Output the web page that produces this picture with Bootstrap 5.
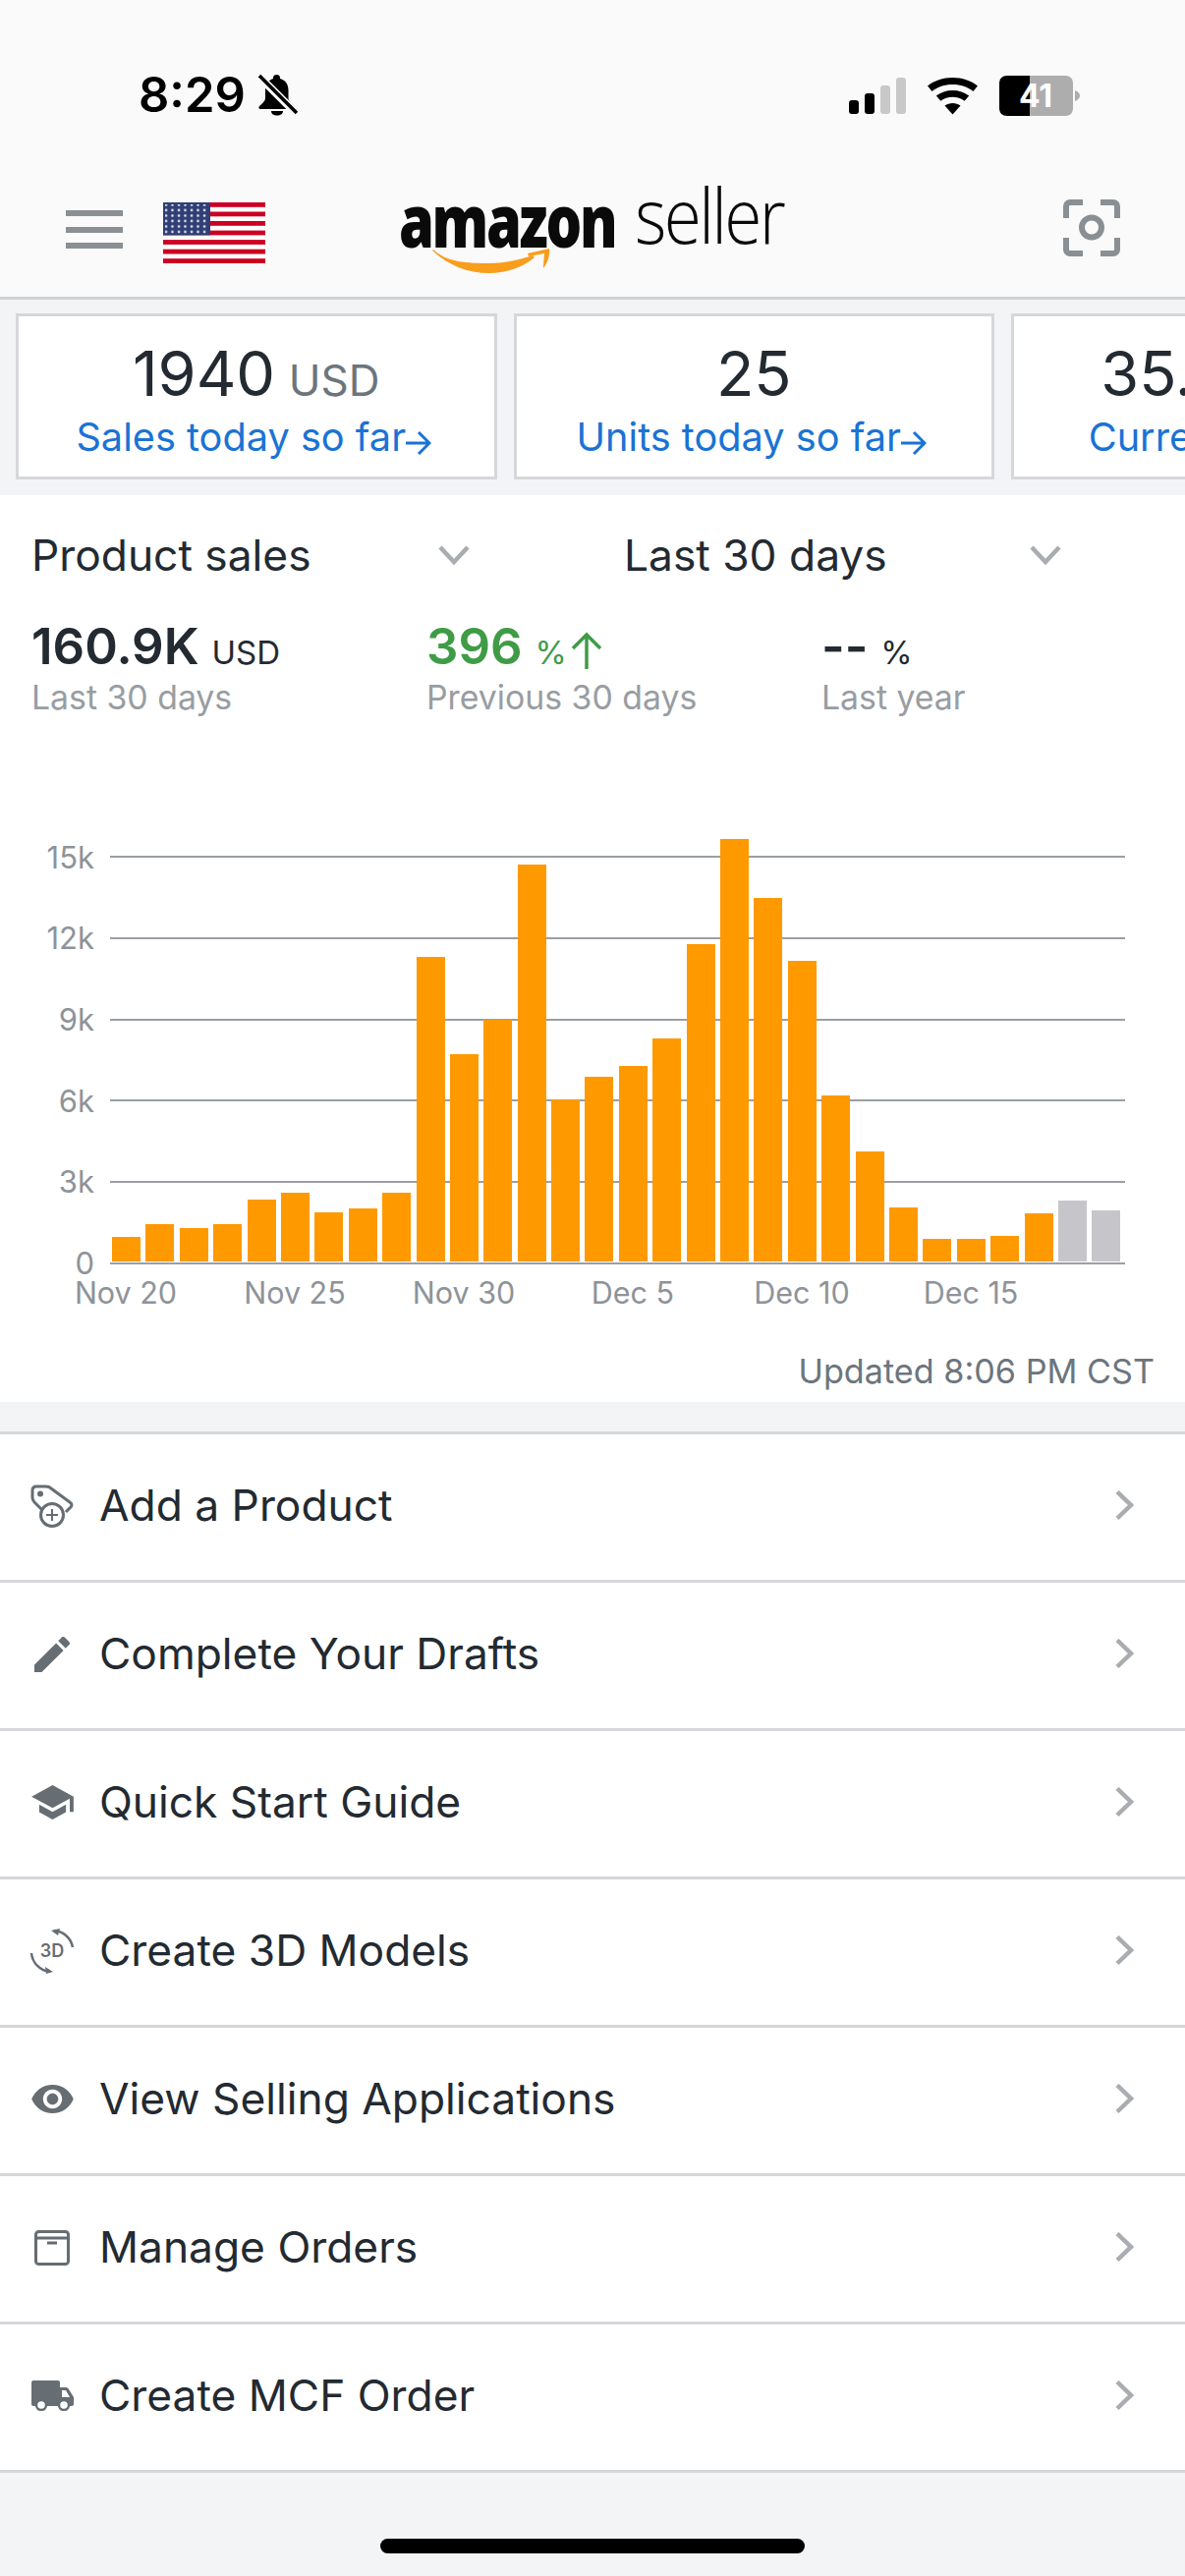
<!DOCTYPE html>
<html lang="en">
<head>
<meta charset="utf-8">
<title>Amazon Seller</title>
<link href="https://cdn.jsdelivr.net/npm/bootstrap@5.3.0/dist/css/bootstrap.min.css" rel="stylesheet">
<style>
html,body{margin:0;height:2622px;overflow:hidden}
body{background:#f3f4f6;color:#232a31;font-family:Inter,"Noto Sans",sans-serif;width:1206px}
.top-head{height:305px;background:#fafafa;border-bottom:3px solid #cfd1d3}
.status-row{height:170px;padding:0 106px 0 141px}
.clock-wrap{margin-top:72px;gap:13px}
.clock{font-size:49px;font-weight:600;color:#000;line-height:1}
.sig{margin-top:77px}
.nav-row{height:131px;padding:0 66px 0 67px;position:relative}
.burger{width:58px;height:39px;display:flex;flex-direction:column;justify-content:space-between;margin-top:-4px}
.burger i{display:block;height:6px;background:#8a8f94}
.flag{margin-left:41px;margin-top:2px}
.logo-wrap{position:absolute;left:409px;top:0;width:400px;height:110px}
.logo-a{position:absolute;left:-3px;top:14px;font-family:"Open Sans",sans-serif;font-weight:800;font-size:74px;line-height:80px;color:#0a0a0a;letter-spacing:-3px;transform:scaleX(.78);transform-origin:left top}
.logo-b{position:absolute;left:237px;top:8px;font-family:"Open Sans",sans-serif;font-weight:300;font-size:78px;line-height:80px;color:#0a0a0a;letter-spacing:-3px;transform:scaleX(.89);transform-origin:left top}
.swoosh{position:absolute;left:31px;top:82px}
.kpi-strip{height:199px;padding:14px 0 0 16px;gap:17px;overflow:hidden}
.kpi{flex:0 0 489.5px;height:169px;background:#fff;border:3px solid #d5d7da;text-align:center;padding-top:20px}
.kpi-num{font-size:63px;line-height:76px;height:76px;color:#232a31;white-space:nowrap}
.kpi-unit{font-size:44px;color:#6c757d;margin-left:-4px}
.kpi-link{font-size:39.700px;line-height:50px;color:#1a73d4;white-space:nowrap;margin-top:2px;padding-right:5px}
.panel{background:#fff;height:923px}
.pick-row{height:122px}
.pick{width:603px;padding-left:32px;padding-right:125px;font-size:44.300px;color:#232a31;white-space:nowrap}
.pick + .pick{padding-left:32px;padding-right:126px}
.stat-name{font-size:51px;line-height:60px;height:60px;font-weight:600;color:#232a31;white-space:nowrap;padding-top:2px}
.stat-name small{font-size:33px;font-weight:400}
.stat-good{color:#3f9c46}
.stat-good small{color:#3f9c46}
.stat-col{padding-left:32px}
.stat-lab{font-size:33.800px;line-height:42px;color:#989da2;white-space:nowrap;margin-top:3px}
.plot{position:relative;margin-top:100px;height:496px}
.tick{height:82.67px;display:flex;align-items:center}
.tick span{width:96px;text-align:right;font-size:31px;color:#8e9399;line-height:1}
.tick i{display:block;height:2px;background:#9b9fa4;width:1033px;margin-left:16px}
.bars{position:absolute;left:114px;right:0;bottom:43px;height:440px;display:flex;align-items:flex-end;gap:5.400px}
.bars i{display:block;width:29px;background:#ff9900}
.bars i.pend{background:#c6c6ca}
.xaxis{display:flex;margin-top:-31px;padding:5px 0 0 42px;height:40px}
.xaxis span{width:172px;text-align:center;font-size:30.500px;line-height:30px;color:#8e9399;white-space:nowrap}
.updated{text-align:right;font-size:34.200px;line-height:40px;color:#6c757d;padding-right:31px;margin-top:40px}
.menu{margin-top:30px;border-top:3px solid #d5d7da;background:#fff}
.menu-row{height:151px;border:0;border-bottom:3px solid #d5d7da;border-radius:0;padding:0 50px 3px 0;display:flex;align-items:center;color:#232a31;font-size:44.300px;background:#fff}
.ico{width:101px;flex:0 0 101px;display:flex;justify-content:center;padding-left:5px}
.home{width:432px;height:15px;background:#000;border-radius:8px;margin:67px auto 0}
</style>
</head>
<body>
<header class="top-head">
  <div class="status-row d-flex justify-content-between align-items-start">
    <div class="clock-wrap d-flex align-items-center">
      <div class="clock">8:29</div>
      <svg width="40" height="42" viewBox="0 0 40 42"><path fill="#000" d="M18.500 0c2 0 3.500 1.300 3.500 3v1c5.500 1.500 8.500 6 8.500 12v8c0 3 3 5 6 8 1 1 .8 3-1 3H2c-1.800 0-2-2-1-3 3-3 6-5 6-8v-8c0-6 3-10.500 8-12V3c0-1.700 1.500-3 3.500-3zM13 37h12c0 3-2.500 4.500-6 4.500S13 40 13 37z"/><path stroke="#fafafa" stroke-width="8" d="M-1 0l40 40"/><path stroke="#000" stroke-width="3.500" d="M1 1l38 38"/></svg>
    </div>
    <svg class="sig" width="236" height="44" viewBox="0 0 236 44">
      <rect x="0" y="25" width="10" height="14" rx="3"/><rect x="16" y="18" width="10" height="21" rx="3"/><rect x="32" y="10" width="10" height="29" rx="3" fill="#c8c8c8"/><rect x="48" y="2" width="10" height="37" rx="3" fill="#c8c8c8"/>
      <path d="M80 10.500C87 5 95.500 2 105.500 2S124 5 131 10.500l-4.600 5.400C120.800 11.500 113.700 9 105.500 9s-15.300 2.500-20.900 6.900z"/>
      <path d="M88.800 20.500c4.600-3.600 10.300-5.600 16.700-5.600s12.100 2 16.700 5.600l-4.600 5.300c-3.300-2.500-7.500-4-12.100-4s-8.800 1.500-12.100 4z"/>
      <path d="M97.500 30.500c2.300-1.600 5-2.500 8-2.500s5.700.9 8 2.500l-8 9z"/>
      <path fill="#000" d="M161 0h23v41h-23c-5 0-8-3-8-8V8c0-5 3-8 8-8z"/>
      <path fill="#adadad" d="M184 0h36c5 0 8 3 8 8v25c0 5-3 8-8 8h-36z"/>
      <path fill="#adadad" d="M230 15c3 1 5 3 5 5.500s-2 4.500-5 5.500z"/>
      <text x="190" y="32" text-anchor="middle" fill="#fff" font-family="Inter,sans-serif" font-weight="700" font-size="32">41</text>
    </svg>
  </div>
  <nav class="nav-row d-flex align-items-center">
    <div class="burger"><i></i><i></i><i></i></div>
    <svg class="flag" width="104" height="62" viewBox="0 0 104 62">
      <defs><pattern id="st" width="6.500" height="5.500" patternUnits="userSpaceOnUse"><circle cx="3" cy="2.500" r="1.300" fill="#e8e9f0"/></pattern></defs>
      <rect width="104" height="62" fill="#fff"/>
      <g fill="#cc0022"><rect y="0" width="104" height="4.800"/><rect y="9.500" width="104" height="4.800"/><rect y="19" width="104" height="4.800"/><rect y="28.600" width="104" height="4.800"/><rect y="38.100" width="104" height="4.800"/><rect y="47.700" width="104" height="4.800"/><rect y="57.200" width="104" height="4.800"/></g>
      <rect width="48" height="33.400" fill="#2f3e75"/><rect x="2" y="2" width="44" height="30" fill="url(#st)"/>
    </svg>
    <div class="logo-wrap">
      <span class="logo-a">amazon</span><span class="logo-b">seller</span>
      <svg class="swoosh" width="122" height="28" viewBox="0 0 122 28" fill="#f99d1c"><path d="M1 2C14 15 36 16 58 16 74 16 90 12 102 8l2 2C92 20 76 26 58 26 36 26 16 18 0 3z"/><path d="M97 6L119 1c1 5-1 14-6 20 0-6 1-13 1-15L98 9z"/></svg>
    </div>
    <svg class="ms-auto" width="58" height="58" viewBox="0 0 58 58" style="margin-top:-8px" fill="none" stroke="#8a8f94" stroke-width="6"><path d="M3 19V7a4 4 0 0 1 4-4h13M38 3h13a4 4 0 0 1 4 4v12M55 39v12a4 4 0 0 1-4 4H38M20 55H7a4 4 0 0 1-4-4V39"/><circle cx="29" cy="28.500" r="10"/></svg>
  </nav>
</header>

<section class="kpi-strip d-flex">
  <div class="kpi"><div class="kpi-num">1940 <span class="kpi-unit">USD</span></div><div class="kpi-link">Sales today so far<svg width="26" height="28" viewBox="0 0 26 28" fill="none" stroke="#1a73d4" stroke-width="3" class="align-text-bottom mb-1"><path d="M0 14h23M13 3l11 11-11 11"/></svg></div></div>
  <div class="kpi"><div class="kpi-num">25</div><div class="kpi-link">Units today so far<svg width="26" height="28" viewBox="0 0 26 28" fill="none" stroke="#1a73d4" stroke-width="3" class="align-text-bottom mb-1"><path d="M0 14h23M13 3l11 11-11 11"/></svg></div></div>
  <div class="kpi"><div class="kpi-num ps-3">35.40K <span class="kpi-unit">USD</span></div><div class="kpi-link">Current balance<svg width="26" height="28" viewBox="0 0 26 28" fill="none" stroke="#1a73d4" stroke-width="3" class="align-text-bottom mb-1"><path d="M0 14h23M13 3l11 11-11 11"/></svg></div></div>
</section>

<section class="panel">
  <div class="pick-row d-flex align-items-center">
    <div class="pick d-flex justify-content-between align-items-center"><span>Product sales</span><svg width="32" height="20" viewBox="0 0 32 20" fill="none" stroke="#a9adb1" stroke-width="4.500"><path d="M2 2l14 15L30 2"/></svg></div>
    <div class="pick d-flex justify-content-between align-items-center"><span>Last 30 days</span><svg width="32" height="20" viewBox="0 0 32 20" fill="none" stroke="#a9adb1" stroke-width="4.500"><path d="M2 2l14 15L30 2"/></svg></div>
  </div>
  <div class="row g-0">
    <div class="col-4 stat-col"><div class="stat-name">160.9K <small>USD</small></div><div class="stat-lab">Last 30 days</div></div>
    <div class="col-4 stat-col"><div class="stat-name stat-good">396 <small>%</small><svg class="ms-1" width="32" height="38" viewBox="0 0 32 38" fill="none" stroke="#3f9c46" stroke-width="3.500"><path d="M16 38V3M2 17L16 3l14 14"/></svg></div><div class="stat-lab">Previous 30 days</div></div>
    <div class="col-4 stat-col"><div class="stat-name">-- <small>%</small></div><div class="stat-lab">Last year</div></div>
  </div>
  <div class="plot">
    <div class="tick"><span>15k</span><i></i></div>
    <div class="tick"><span>12k</span><i></i></div>
    <div class="tick"><span>9k</span><i></i></div>
    <div class="tick"><span>6k</span><i></i></div>
    <div class="tick"><span>3k</span><i></i></div>
    <div class="tick"><span>0</span><i></i></div>
    <div class="bars">
      <i style="height:25px"></i><i style="height:38px"></i><i style="height:34px"></i><i style="height:38px"></i><i style="height:63px"></i><i style="height:70px"></i><i style="height:50px"></i><i style="height:54px"></i><i style="height:70px"></i><i style="height:310px"></i><i style="height:211px"></i><i style="height:246px"></i><i style="height:404px"></i><i style="height:165px"></i><i style="height:188px"></i><i style="height:199px"></i><i style="height:227px"></i><i style="height:323px"></i><i style="height:430px"></i><i style="height:370px"></i><i style="height:306px"></i><i style="height:169px"></i><i style="height:112px"></i><i style="height:55px"></i><i style="height:23px"></i><i style="height:23px"></i><i style="height:26px"></i><i style="height:49px"></i><i class="pend" style="height:62px"></i><i class="pend" style="height:52px"></i>
    </div>
  </div>
  <div class="xaxis"><span>Nov 20</span><span>Nov 25</span><span>Nov 30</span><span>Dec 5</span><span>Dec 10</span><span>Dec 15</span></div>
  <div class="updated">Updated 8:06 PM CST</div>
</section>

<div class="list-group menu rounded-0">
  <a class="list-group-item menu-row text-decoration-none" href="#"><span class="ico"><svg width="44" height="44" viewBox="0 0 44 44" fill="none" stroke="#666d73" stroke-width="3"><path d="M12 26L4 18Q2 16 2 13V6Q2 2 6 2H16Q19 2 21 4L40 18Q44 21 40 24L36 28"/><circle cx="10" cy="9.500" r="3" fill="#666d73" stroke="none"/><circle cx="22" cy="31" r="11.500"/><path stroke-width="2" d="M22 25v12M16 31h12"/></svg></span><span>Add a Product</span><svg class="ms-auto" width="22" height="32" viewBox="0 0 22 32" fill="none" stroke="#a9adb1" stroke-width="4.500"><path d="M3 1.500l14 13.500L3 28.500"/></svg></a>
  <a class="list-group-item menu-row text-decoration-none" href="#"><span class="ico"><svg width="36" height="36" viewBox="3 3 18 18" fill="#666d73"><path d="M3 17.250V21h3.750L17.810 9.940l-3.750-3.750L3 17.250zM20.710 7.040a1 1 0 0 0 0-1.410l-2.340-2.340a1 1 0 0 0-1.410 0l-1.830 1.830 3.750 3.750 1.830-1.830z"/></svg></span><span>Complete Your Drafts</span><svg class="ms-auto" width="22" height="32" viewBox="0 0 22 32" fill="none" stroke="#a9adb1" stroke-width="4.500"><path d="M3 1.500l14 13.500L3 28.500"/></svg></a>
  <a class="list-group-item menu-row text-decoration-none" href="#"><span class="ico"><svg width="43" height="35" viewBox="1 3 22 18" fill="#666d73"><path d="M5 13.180v4L12 21l7-3.820v-4L12 17l-7-3.820zM12 3L1 9l11 6 9-4.910V17h2V9L12 3z"/></svg></span><span>Quick Start Guide</span><svg class="ms-auto" width="22" height="32" viewBox="0 0 22 32" fill="none" stroke="#a9adb1" stroke-width="4.500"><path d="M3 1.500l14 13.500L3 28.500"/></svg></a>
  <a class="list-group-item menu-row text-decoration-none" href="#"><span class="ico"><svg width="46" height="46" viewBox="0 0 46 46" fill="none" stroke="#666d73" stroke-width="2.500"><path d="M25 2A21 21 0 0 1 44 19M2 25A21 21 0 0 0 21 44"/><path fill="#666d73" stroke="none" d="M22 2l9-2-2 7zM24 44l-8-5 1 7z"/><text x="23" y="29" text-anchor="middle" fill="#666d73" stroke="none" font-family="Inter,sans-serif" font-weight="600" font-size="18">3D</text></svg></span><span>Create 3D Models</span><svg class="ms-auto" width="22" height="32" viewBox="0 0 22 32" fill="none" stroke="#a9adb1" stroke-width="4.500"><path d="M3 1.500l14 13.500L3 28.500"/></svg></a>
  <a class="list-group-item menu-row text-decoration-none" href="#"><span class="ico"><svg width="43" height="29" viewBox="1 4.500 22 15" fill="#666d73"><path d="M12 4.500C7 4.500 2.730 7.610 1 12c1.730 4.390 6 7.500 11 7.500s9.270-3.110 11-7.500c-1.730-4.390-6-7.500-11-7.500zM12 17c-2.760 0-5-2.240-5-5s2.240-5 5-5 5 2.240 5 5-2.240 5-5 5zm0-8c-1.660 0-3 1.340-3 3s1.340 3 3 3 3-1.340 3-3-1.340-3-3-3z"/></svg></span><span>View Selling Applications</span><svg class="ms-auto" width="22" height="32" viewBox="0 0 22 32" fill="none" stroke="#a9adb1" stroke-width="4.500"><path d="M3 1.500l14 13.500L3 28.500"/></svg></a>
  <a class="list-group-item menu-row text-decoration-none" href="#"><span class="ico"><svg width="36" height="36" viewBox="0 0 36 36" fill="none" stroke="#666d73" stroke-width="3"><rect x="1.500" y="1.500" width="33" height="33" rx="3"/><path d="M2 8h32M13 13h10"/></svg></span><span>Manage Orders</span><svg class="ms-auto" width="22" height="32" viewBox="0 0 22 32" fill="none" stroke="#a9adb1" stroke-width="4.500"><path d="M3 1.500l14 13.500L3 28.500"/></svg></a>
  <a class="list-group-item menu-row text-decoration-none" href="#"><span class="ico"><svg width="43" height="31" viewBox="0 0 43 31" fill="#666d73"><path d="M2 0h25a2 2 0 0 1 2 2v5h6c1 0 2 .5 3 2l5 8v7a2 2 0 0 1-2 2H2a2 2 0 0 1-2-2V2a2 2 0 0 1 2-2z"/><path fill="#fff" d="M31 10h4l4 7h-8z"/><circle cx="10" cy="25" r="5" fill="#fff" stroke="#666d73" stroke-width="2.500"/><circle cx="33" cy="25" r="5" fill="#fff" stroke="#666d73" stroke-width="2.500"/></svg></span><span>Create MCF Order</span><svg class="ms-auto" width="22" height="32" viewBox="0 0 22 32" fill="none" stroke="#a9adb1" stroke-width="4.500"><path d="M3 1.500l14 13.500L3 28.500"/></svg></a>
</div>
<div class="home"></div>
<script src="https://cdn.jsdelivr.net/npm/bootstrap@5.3.0/dist/js/bootstrap.bundle.min.js"></script>
</body>
</html>
